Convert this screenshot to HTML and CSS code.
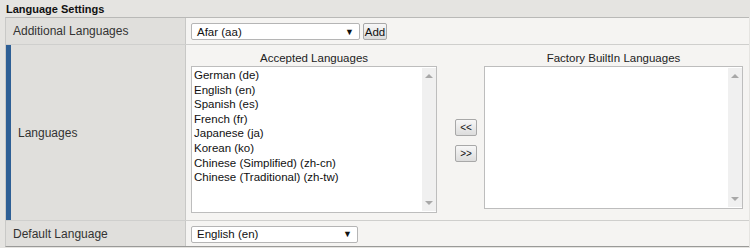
FILE: index.html
```html
<!DOCTYPE html>
<html>
<head>
<meta charset="utf-8">
<link rel="stylesheet" href="styles.css">
</head>
<body>
<div class="title">Language Settings</div>
<div class="table">
  <div class="row r1">
    <div class="label">Additional Languages</div>
    <div class="value">
      <div class="select sel-add"><span>Afar (aa)</span><span class="arrow">▼</span></div>
      <div class="btn add">Add</div>
    </div>
  </div>
  <div class="row r2">
    <div class="label marked">Languages</div>
    <div class="value lists">
      <div class="col accepted">
        <div class="cap">Accepted Languages</div>
        <div class="listbox tall">
          <div class="items">
            <div>German (de)</div>
            <div>English (en)</div>
            <div>Spanish (es)</div>
            <div>French (fr)</div>
            <div>Japanese (ja)</div>
            <div>Korean (ko)</div>
            <div>Chinese (Simplified) (zh-cn)</div>
            <div>Chinese (Traditional) (zh-tw)</div>
          </div>
          <div class="sb"><span class="up"></span><span class="down"></span></div>
        </div>
      </div>
      <div class="mid">
        <div class="btn small">&lt;&lt;</div>
        <div class="btn small">&gt;&gt;</div>
      </div>
      <div class="col factory">
        <div class="cap">Factory BuiltIn Languages</div>
        <div class="listbox short">
          <div class="items"></div>
          <div class="sb"><span class="up"></span><span class="down"></span></div>
        </div>
      </div>
    </div>
  </div>
  <div class="row r3">
    <div class="label">Default Language</div>
    <div class="value">
      <div class="select sel-def"><span>English (en)</span><span class="arrow">▼</span></div>
    </div>
  </div>
</div>
</body>
</html>
```
FILE: styles.css
```css
* { box-sizing: border-box; }
html, body { margin: 0; padding: 0; }
body {
  width: 750px;
  height: 248px;
  background: #e5e4e1;
  font-family: "Liberation Sans", Arial, sans-serif;
  font-size: 12px;
  color: #222;
  overflow: hidden;
}
.title {
  font-weight: bold;
  font-size: 11px;
  padding: 3px 0 0 6px;
  height: 17px;
  color: #111;
}
.table {
  margin-left: 5px;
  width: 744px;
  border-top: 1px solid #b9b9b7;
  border-left: 1px solid #c9c9c7;
  border-bottom: 1px solid #9a9a98;
}
.row {
  display: flex;
  border-bottom: 1px solid #cfcfcd;
}
.row.r3 { border-bottom: none; }
.label {
  width: 180px;
  background: #e0dfdc;
  border-right: 1px solid #c8c8c6;
  display: flex;
  align-items: center;
  padding-left: 7px;
  color: #333;
  font-size: 12px;
}
.label.marked {
  border-left: 5px solid #2e5f95;
  padding-left: 7px;
}
.value {
  flex: 1;
  background: #f5f4f2;
  display: flex;
  align-items: center;
  padding-left: 5px;
}
.r1 { height: 27px; }
.r1 .value { padding-top: 1px; }
.r2 { height: 176px; }
.r3 { height: 25px; }
.select {
  height: 17px;
  background: #fff;
  border: 1px solid #b5b5b5;
  border-radius: 2px;
  display: flex;
  align-items: center;
  justify-content: space-between;
  padding: 0 5px 0 5px;
  font-size: 11.5px;
  color: #111;
}
.sel-add { width: 169px; }
.sel-def { width: 167px; margin-top: 1px; }
.arrow { font-size: 9px; color: #111; }
.btn {
  height: 17px;
  border: 1px solid #a8a8a8;
  border-radius: 2px;
  background: linear-gradient(#f7f7f7, #dcdcdc);
  font-size: 11.5px;
  color: #111;
  display: flex;
  align-items: center;
  justify-content: center;
}
.btn.add { width: 24px; margin-left: 3px; }
.lists {
  align-items: flex-start;
  padding-top: 5px;
}
.col { display: flex; flex-direction: column; }
.cap {
  text-align: center;
  font-size: 11.5px;
  color: #222;
  height: 16px;
  line-height: 16px;
}
.accepted { width: 246px; }
.factory { width: 259px; margin-left: 7px; }
.listbox {
  margin-top: 0;
  background: #fff;
  border: 1px solid #bdbdbd;
  display: flex;
}
.listbox.tall { height: 147px; }
.listbox.short { height: 143px; }
.items {
  flex: 1;
  padding: 1px 0 0 2px;
  line-height: 14.6px;
  font-size: 11.5px;
  color: #111;
}
.sb {
  width: 14px;
  margin: 1px 0;
  background: #f0f0f0;
  display: flex;
  flex-direction: column;
  justify-content: space-between;
  align-items: center;
  padding: 6px 0;
}
.up, .down {
  width: 0; height: 0;
  border-left: 4px solid transparent;
  border-right: 4px solid transparent;
}
.up { border-bottom: 4px solid #a8a8a8; }
.down { border-top: 4px solid #a8a8a8; }
.mid {
  width: 22px;
  margin-left: 18px;
  padding-top: 69px;
  display: flex;
  flex-direction: column;
  gap: 9px;
}
.btn.small {
  width: 22px;
  height: 17px;
  font-size: 10px;
}
```
